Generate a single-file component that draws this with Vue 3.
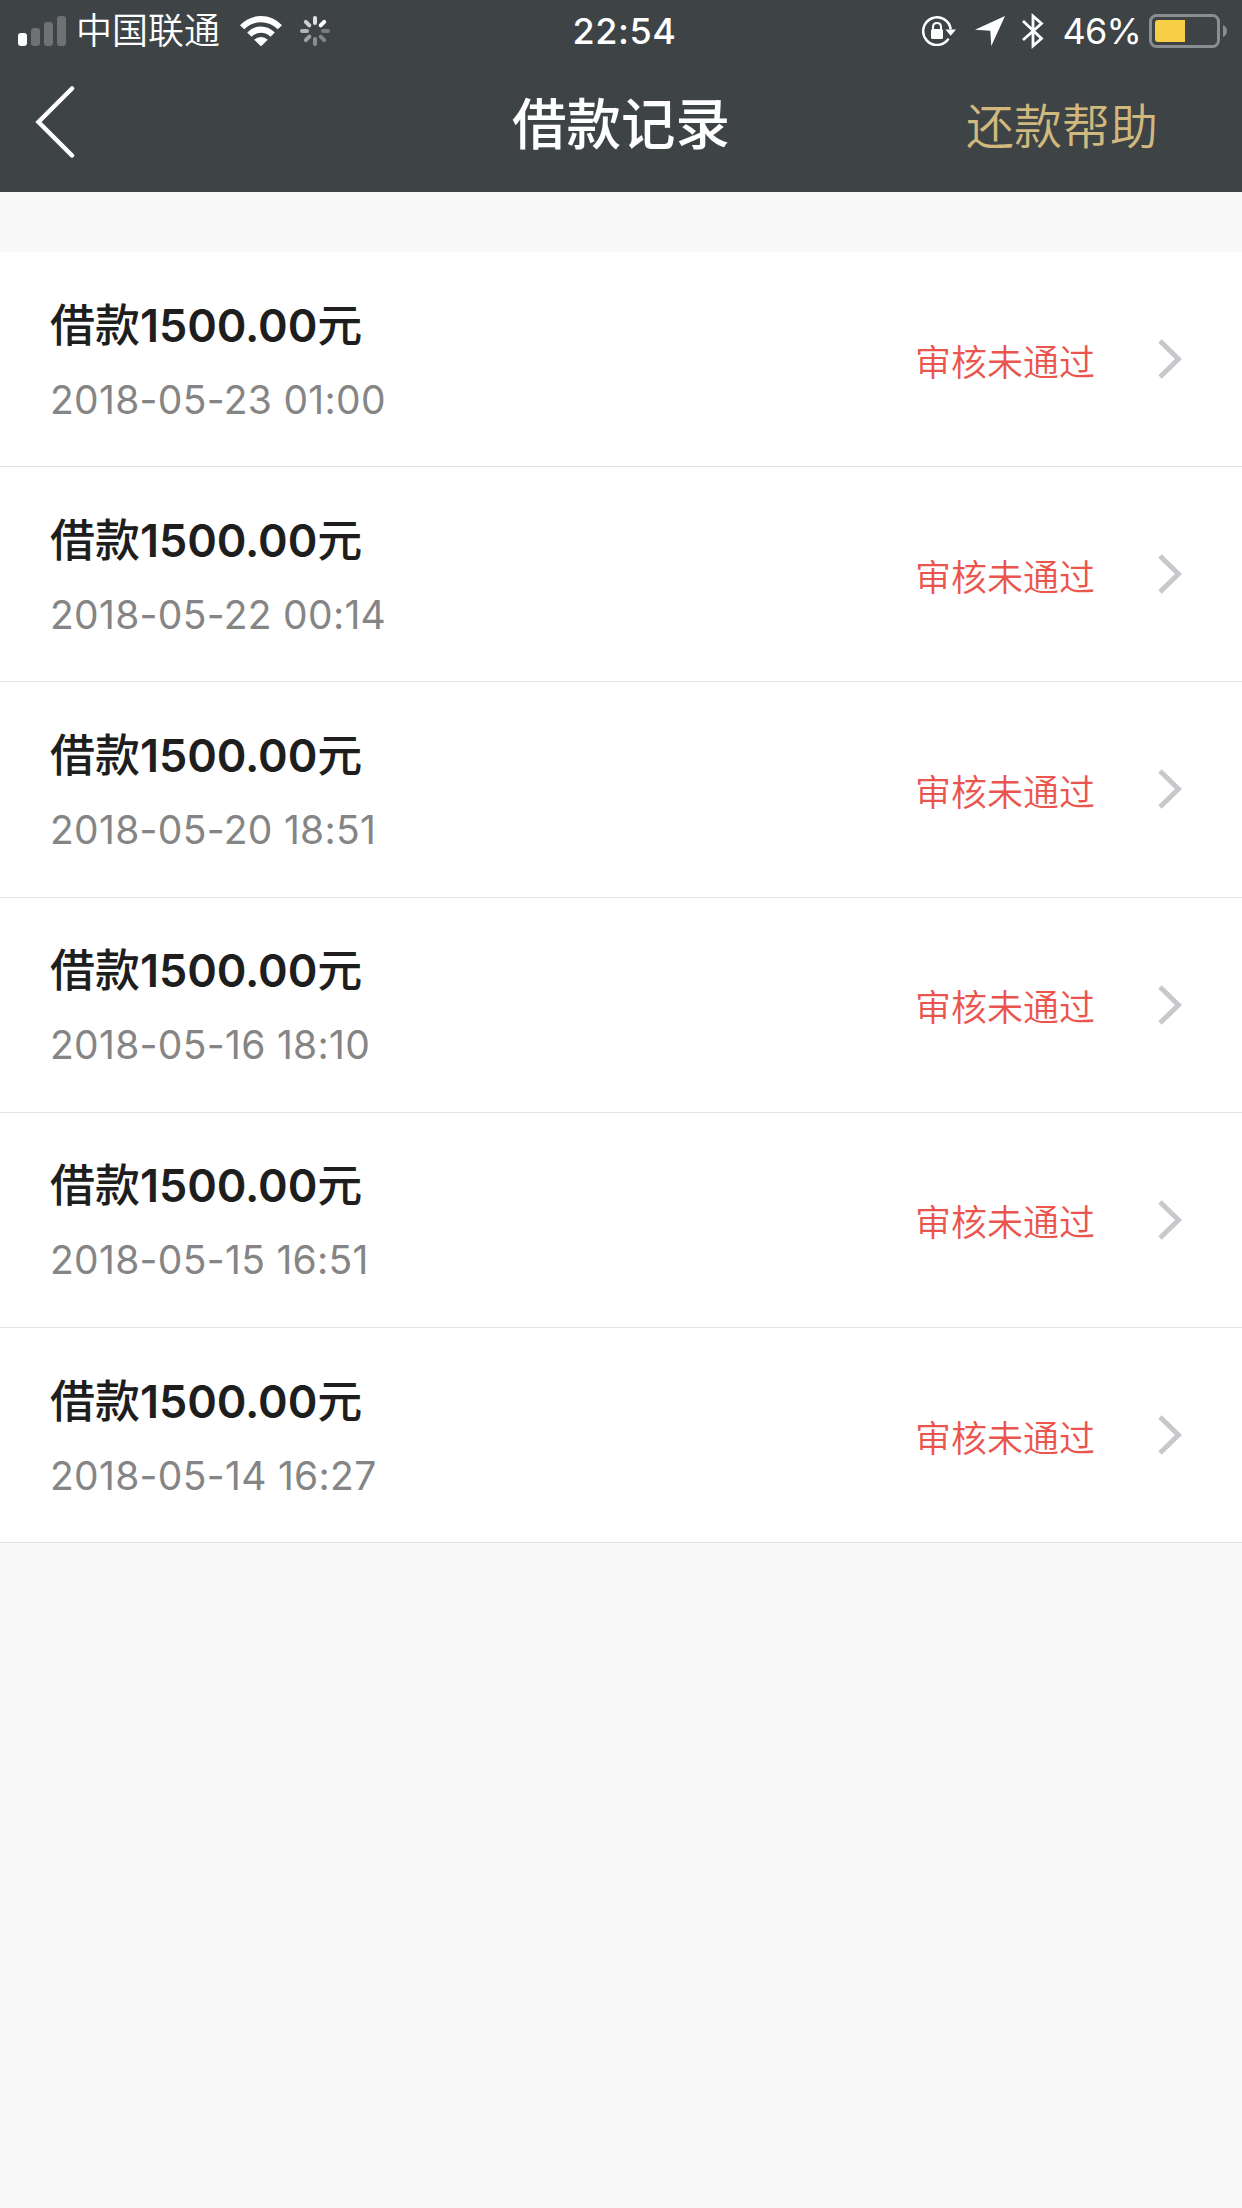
<script setup>
import { ref } from 'vue'

const records = ref([
  { amount: '1500.00', time: '2018-05-23 01:00', status: '审核未通过' },
  { amount: '1500.00', time: '2018-05-22 00:14', status: '审核未通过' },
  { amount: '1500.00', time: '2018-05-20 18:51', status: '审核未通过' },
  { amount: '1500.00', time: '2018-05-16 18:10', status: '审核未通过' },
  { amount: '1500.00', time: '2018-05-15 16:51', status: '审核未通过' },
  { amount: '1500.00', time: '2018-05-14 16:27', status: '审核未通过' },
])

// opacity of each spinner blade, clockwise from the top
const blades = [0.85, 1, 0.3, 0.35, 0.4, 0.5, 0.6, 0.75]
</script>

<template>
  <div class="page">
    <header class="header">
      <div class="statusBar">
        <div class="statusLeft">
          <svg class="signal" width="48" height="30" viewBox="0 0 48 30" fill="#fff">
            <rect x="0" y="17" width="9" height="13" rx="3" />
            <rect x="13" y="12" width="9" height="18" rx="3" opacity="0.25" />
            <rect x="26" y="6" width="9" height="24" rx="3" opacity="0.25" />
            <rect x="39" y="0" width="9" height="30" rx="3" opacity="0.25" />
          </svg>
          <span class="carrier">中国联通</span>
          <svg class="wifi" width="42" height="30" viewBox="0 0 42 30" fill="#fff">
            <path d="M0 9.2Q9 0 21 0T42 9.2L37.8 13.2Q30.5 6.2 21 6.2T4.2 13.2Z" />
            <path d="M7.2 16.6Q13 10.4 21 10.4T34.8 16.6L30.5 20.8Q26.5 16.7 21 16.7T11.5 20.8Z" />
            <path d="M14.2 23.8Q17 21 21 21T27.8 23.8L21 30.3Z" />
          </svg>
          <svg class="spinner" width="30" height="30" viewBox="0 0 30 30" fill="#fff">
            <rect v-for="(o, i) in blades" :key="i" x="13" y="0" width="4" height="9" rx="2"
              :opacity="o" :transform="`rotate(${i * 45} 15 15)`" />
          </svg>
        </div>
        <span class="clock">22:54</span>
        <div class="statusRight">
          <svg class="lock" width="34" height="30" viewBox="0 0 34 30">
            <path d="M26.6 22.6A13.8 13.8 0 1 1 28.7 13.5" fill="none" stroke="#fff" stroke-width="2.5" />
            <path d="M23.5 13.5H34L28.7 19.7Z" fill="#fff" />
            <path d="M11 14V11Q11 7 15 7T19 11V14" fill="none" stroke="#fff" stroke-width="2" />
            <rect x="9" y="13" width="12" height="10" rx="1.5" fill="#fff" />
          </svg>
          <svg class="arrow" width="30" height="30" viewBox="0 0 30 30" fill="#fff">
            <path d="M30 0L16.3 30L15.3 14.7L0 13.7Z" />
          </svg>
          <svg class="bluetooth" width="22" height="38" viewBox="0 0 22 38" fill="none" stroke="#fff" stroke-width="2.8">
            <path d="M1 9L19.5 26.5L11 34V4L19.5 11.5L1 28" />
          </svg>
          <span class="percent">46%</span>
          <svg class="battery" width="78" height="34" viewBox="0 0 78 34">
            <rect x="1.5" y="1.5" width="68" height="31" rx="6" fill="none" stroke="#8b8e90" stroke-width="3" />
            <path d="M9 6H36V28H9Q6 28 6 25V9Q6 6 9 6Z" fill="#f8ce46" />
            <path d="M74 11Q78 13 78 17T74 23Z" fill="#8b8e90" />
          </svg>
        </div>
      </div>
      <nav class="navBar">
        <svg class="back" width="40" height="72" viewBox="0 0 40 72">
          <path d="M37 2.5L3.5 36L37 69.5" fill="none" stroke="#fff" stroke-width="4.5" stroke-linecap="round" />
        </svg>
        <h1 class="title">借款记录</h1>
        <span class="help">还款帮助</span>
      </nav>
    </header>
    <div class="list">
      <div v-for="record in records" :key="record.time" class="record">
        <div class="info">
          <div class="amount">借款<b>{{ record.amount }}</b>元</div>
          <div class="time">{{ record.time }}</div>
        </div>
        <span class="status">{{ record.status }}</span>
        <svg class="chevron" width="24" height="40" viewBox="0 0 24 40">
          <path d="M2 2L20.5 20L2 38" fill="none" stroke="#c7c7cc" stroke-width="5" />
        </svg>
      </div>
    </div>
  </div>
</template>

<style>
body {
  background-color: #f9f9f9;
}
</style>

<style scoped>
.page {
  min-height: 2208px;
  background-color: #f9f9f9;
  font-family: Inter, "Noto Sans CJK SC", sans-serif;
}

.header {
  height: 192px;
  background-color: #3e4346;
  color: #fff;
}

.statusBar {
  display: grid;
  grid-template-columns: 1fr auto 1fr;
  height: 60px;
  align-items: center;
  padding: 0 15px 0 18px;
  box-sizing: border-box;
}

.statusLeft,
.statusRight {
  display: flex;
  align-items: center;
}

.statusRight {
  justify-content: flex-end;
}

.carrier {
  margin-left: 10px;
  padding-top: 1px;
  font-size: 36px;
  line-height: 60px;
  font-weight: 350;
}

.wifi {
  margin-left: 20px;
}

.spinner {
  margin-left: 18px;
}

.clock {
  font-size: 36px;
  font-weight: 500;
  line-height: 60px;
  padding-left: 4px;
  letter-spacing: 0.6px;
}

.arrow {
  margin-left: 19px;
}

.bluetooth {
  margin-left: 17px;
}

.percent {
  margin-left: 18px;
  font-size: 36px;
  line-height: 60px;
  letter-spacing: -0.8px;
}

.battery {
  margin-left: 8px;
}

.navBar {
  display: grid;
  grid-template-columns: 1fr auto 1fr;
  align-items: center;
  height: 124px;
  padding: 0 84px 0 35px;
}

.title {
  margin: 0;
  padding: 4px 0 0 49px;
  font-size: 54.5px;
  font-weight: 500;
  line-height: 80px;
}

.help {
  justify-self: end;
  padding-top: 10px;
  font-size: 48px;
  font-weight: 350;
  line-height: 72px;
  color: #d0b87e;
}

.list {
  margin-top: 60px;
}

.record {
  display: flex;
  align-items: center;
  height: 215.2px;
  box-sizing: border-box;
  padding: 0 60px 0 50px;
  background-color: #fff;
  border-bottom: 1px solid #e2e2e2;
}

.info {
  flex: 1;
  padding-top: 7px;
}

.amount {
  font-size: 45px;
  font-weight: 500;
  line-height: 74px;
  color: #1e1e1e;
}

.amount b {
  font-weight: 600;
  letter-spacing: -0.1px;
}

.time {
  font-size: 39px;
  line-height: 74px;
  letter-spacing: 0.3px;
  color: #858585;
}

.status {
  padding-top: 7px;
  font-size: 36px;
  font-weight: 350;
  line-height: 54px;
  color: #ea554d;
}

.chevron {
  margin-left: 63px;
}
</style>
